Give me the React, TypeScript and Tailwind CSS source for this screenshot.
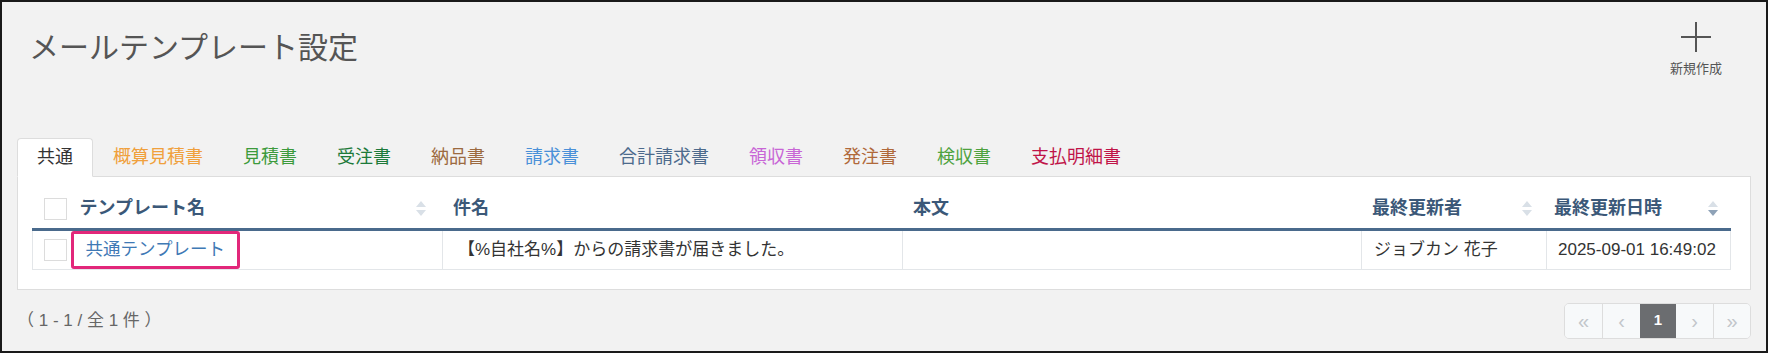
import React from 'react';

const font = { fontFamily: '"Liberation Sans", "Noto Sans CJK JP", sans-serif' };

const tabs = [
  { label: '共通', color: 'text-[#333333]', active: true },
  { label: '概算見積書', color: 'text-[#f0a03c]' },
  { label: '見積書', color: 'text-[#3c9a3c]' },
  { label: '受注書', color: 'text-[#1d7a3a]' },
  { label: '納品書', color: 'text-[#9c6a40]' },
  { label: '請求書', color: 'text-[#4a90d8]' },
  { label: '合計請求書', color: 'text-[#4d6a8c]' },
  { label: '領収書', color: 'text-[#c866d6]' },
  { label: '発注書', color: 'text-[#b0693a]' },
  { label: '検収書', color: 'text-[#4ea23e]' },
  { label: '支払明細書', color: 'text-[#c01448]' },
];

function SortIcon({ active = false }: { active?: boolean }) {
  return (
    <svg width="10" height="17" viewBox="0 0 10 17" className="shrink-0">
      <path d="M0 7 L5 1 L10 7 Z" fill="#d9e0e7" />
      <path d="M0 10 L5 16 L10 10 Z" fill={active ? '#8ea2b7' : '#d9e0e7'} />
    </svg>
  );
}

function Checkbox() {
  return <div className="h-[22px] w-[23px] border border-[#dcdcdc] bg-white" />;
}

export default function App() {
  return (
    <div className="h-[353px] w-[1768px] overflow-hidden border-2 border-[#1a1a1a] bg-[#f2f2f2]" style={font}>
      <div className="flex h-[136px] items-start justify-between pl-[27px] pr-[44px]">
        <h1 className="pt-[23px] text-[30px] leading-[45px] text-[#555555]">メールテンプレート設定</h1>
        <button className="flex flex-col items-center pt-[20px] text-[#555555]">
          <svg width="30" height="30" viewBox="0 0 30 30">
            <path d="M15 0 V30 M0 15 H30" stroke="#555555" strokeWidth="2" />
          </svg>
          <span className="mt-[8px] text-[13px] leading-[18px]">新規作成</span>
        </button>
      </div>

      <div className="px-[15px]">
        <div className="flex border-b border-[#dddddd]">
          {tabs.map((t) => (
            <div
              key={t.label}
              className={`-mb-px flex h-[39px] items-center rounded-t-[4px] border px-[19px] text-[18px] ${t.color} ${
                t.active ? 'border-[#dddddd] border-b-white bg-white' : 'border-transparent'
              }`}
            >
              {t.label}
            </div>
          ))}
        </div>

        <div className="border-x border-b border-[#dddddd] bg-white pb-[19px] pl-[14px] pr-[18px] pt-[13px]">
          <table className="w-[1698px] table-fixed border-collapse text-[17px]">
            <colgroup>
              <col className="w-[38px]" />
              <col className="w-[372px]" />
              <col className="w-[460px]" />
              <col className="w-[459px]" />
              <col className="w-[185px]" />
              <col className="w-[184px]" />
            </colgroup>
            <thead>
              <tr className="h-[39px] text-left text-[18px] font-bold text-[#3b5878]">
                <th className="border-b-[3px] border-[#4a6a8c] pl-[11px]">
                  <Checkbox />
                </th>
                <th className="border-b-[3px] border-[#4a6a8c] pl-[9px] pr-[16px]">
                  <div className="flex items-center justify-between">
                    <span>テンプレート名</span>
                    <SortIcon />
                  </div>
                </th>
                <th className="border-b-[3px] border-l border-[#4a6a8c] border-l-white pl-[10px]">件名</th>
                <th className="border-b-[3px] border-l border-[#4a6a8c] border-l-white pl-[10px]">本文</th>
                <th className="border-b-[3px] border-l border-[#4a6a8c] border-l-white pl-[10px] pr-[14px]">
                  <div className="flex items-center justify-between">
                    <span>最終更新者</span>
                    <SortIcon />
                  </div>
                </th>
                <th className="border-b-[3px] border-l border-[#4a6a8c] border-l-white pl-[7px] pr-[13px]">
                  <div className="flex items-center justify-between">
                    <span>最終更新日時</span>
                    <SortIcon active />
                  </div>
                </th>
              </tr>
            </thead>
            <tbody>
              <tr className="h-[39px] text-[#333333]">
                <td className="border-b border-l border-[#e3e6e9] pl-[11px]">
                  <Checkbox />
                </td>
                <td className="border-b border-[#e3e6e9] p-0">
                  <div className="inline-flex h-[38px] items-center rounded-[3px] border-[3px] border-[#e2277a] px-[12px] text-[17.5px] text-[#3f79b5]">
                    共通テンプレート
                  </div>
                </td>
                <td className="border-b border-l border-[#e3e6e9] pl-[15px]">【%自社名%】からの請求書が届きました。</td>
                <td className="border-b border-l border-[#e3e6e9]"></td>
                <td className="border-b border-l border-[#e3e6e9] pl-[12px]">ジョブカン 花子</td>
                <td className="border-x border-b border-[#e3e6e9] pl-[11px]">2025-09-01 16:49:02</td>
              </tr>
            </tbody>
          </table>
        </div>

        <div className="mt-[13px] flex items-center justify-between">
          <span className="text-[17px] text-[#666666]">（ 1 - 1 / 全 1 件 ）</span>
          <div className="flex h-[36px] overflow-hidden rounded-[5px] border border-[#dddddd] text-[20px] text-[#c2c6ca]">
            <div className="flex w-[37px] items-center justify-center bg-[#f7f9fa]">«</div>
            <div className="flex w-[38px] items-center justify-center border-l border-[#dddddd] bg-[#f7f9fa]">‹</div>
            <div className="flex w-[36px] items-center justify-center bg-[#6b6d70] text-[15px] font-bold text-white">1</div>
            <div className="flex w-[37px] items-center justify-center bg-[#f7f9fa]">›</div>
            <div className="flex w-[37px] items-center justify-center border-l border-[#dddddd] bg-[#f7f9fa]">»</div>
          </div>
        </div>
      </div>
    </div>
  );
}
